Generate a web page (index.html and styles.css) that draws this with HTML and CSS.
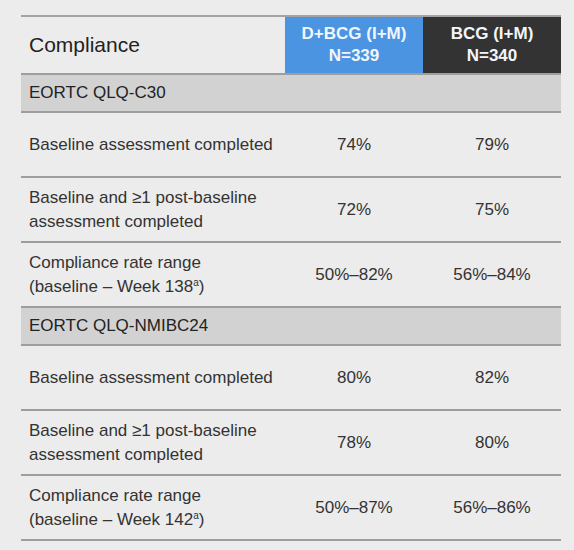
FILE: index.html
```html
<!DOCTYPE html>
<html>
<head>
<meta charset="utf-8">
<link rel="stylesheet" href="styles.css">
</head>
<body>
<div class="table">
  <div class="row head">
    <div class="cell label title"><span>Compliance</span></div>
    <div class="cell arm arm-d"><span>D+BCG (I+M)<br>N=339</span></div>
    <div class="cell arm arm-b"><span>BCG (I+M)<br>N=340</span></div>
  </div>
  <div class="row section"><div class="cell label"><span>EORTC QLQ-C30</span></div></div>
  <div class="row data">
    <div class="cell label"><span>Baseline assessment completed</span></div>
    <div class="cell val">74%</div>
    <div class="cell val">79%</div>
  </div>
  <div class="row data">
    <div class="cell label"><span>Baseline and ≥1 post-baseline<br>assessment completed</span></div>
    <div class="cell val">72%</div>
    <div class="cell val">75%</div>
  </div>
  <div class="row data">
    <div class="cell label"><span>Compliance rate range<br>(baseline – Week 138<sup>a</sup>)</span></div>
    <div class="cell val">50%–82%</div>
    <div class="cell val">56%–84%</div>
  </div>
  <div class="row section"><div class="cell label"><span>EORTC QLQ-NMIBC24</span></div></div>
  <div class="row data">
    <div class="cell label"><span>Baseline assessment completed</span></div>
    <div class="cell val">80%</div>
    <div class="cell val">82%</div>
  </div>
  <div class="row data">
    <div class="cell label"><span>Baseline and ≥1 post-baseline<br>assessment completed</span></div>
    <div class="cell val">78%</div>
    <div class="cell val">80%</div>
  </div>
  <div class="row data">
    <div class="cell label"><span>Compliance rate range<br>(baseline – Week 142<sup>a</sup>)</span></div>
    <div class="cell val">50%–87%</div>
    <div class="cell val">56%–86%</div>
  </div>
</div>
</body>
</html>
```
FILE: styles.css
```css
html, body {
  margin: 0;
  padding: 0;
}
body {
  background: #ececec;
  font-family: "Liberation Sans", Arial, sans-serif;
  color: #333;
  width: 574px;
  height: 550px;
  overflow: hidden;
}
.table {
  margin: 15px 0 0 21px;
  width: 540px;
  border-top: 2px solid #a3a3a3;
}
.row {
  display: grid;
  grid-template-columns: 264px 138px 138px;
  border-bottom: 2px solid #9e9e9e;
}
.cell {
  display: flex;
  align-items: center;
}
.label {
  padding-left: 8px;
  font-size: 17px;
  line-height: 24px;
}
.head {
  height: 56px;
}
.title {
  font-size: 21px;
  color: #222;
}
.arm {
  justify-content: center;
  text-align: center;
  font-weight: bold;
  font-size: 17px;
  line-height: 22px;
  color: #f2f5fa;
}
.arm-d {
  background: #4a94e2;
}
.arm-b {
  background: #333333;
}
.section {
  height: 36px;
  background: #d2d2d2;
}
.section .label {
  grid-column: 1 / 4;
  color: #222;
}
.data {
  height: 63px;
}
.val {
  justify-content: center;
  font-size: 17px;
}
sup {
  font-size: 10px;
  line-height: 0;
  vertical-align: 6px;
}
```
